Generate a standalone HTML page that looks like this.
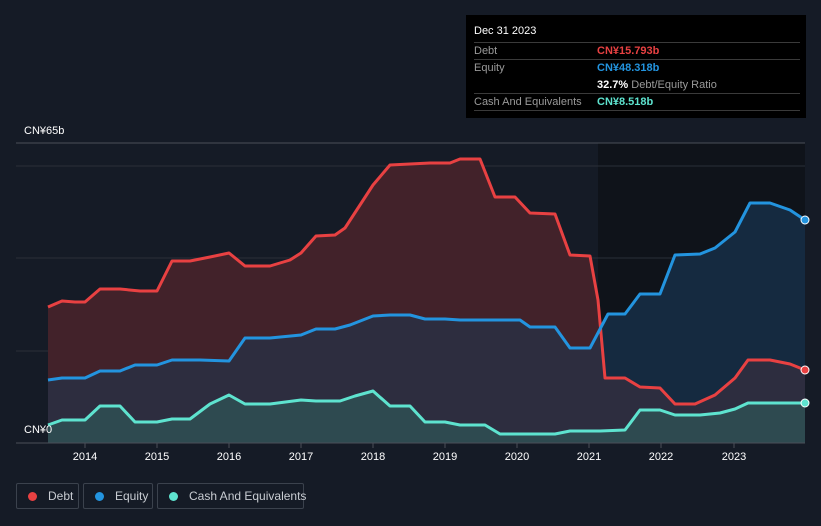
<!DOCTYPE html><html><head><style>
body{margin:0;width:821px;height:526px;background:#151b26;font-family:"Liberation Sans",sans-serif;overflow:hidden;position:relative}
.t{position:absolute;color:#fff;font-size:11px}
.tip{position:absolute;left:466px;top:15px;width:340px;height:103px;background:#000}
.row{position:absolute;left:8px;width:326px;border-top:1px solid #3a3a3a;font-size:11px;color:#9a9a9a}
.lg{position:absolute;top:483px;height:26px;box-sizing:border-box;border:1px solid #3b424d;border-radius:2px;color:#c8ccd2;font-size:12px;line-height:24px;white-space:nowrap}
.lg i{display:inline-block;width:9px;height:9px;border-radius:50%;margin:0 11px 0 11px;vertical-align:-1px}
</style></head><body>
<svg width="821" height="526" style="position:absolute;left:0;top:0">
<rect x="598" y="143" width="207" height="300" fill="#0f131a"/>
<line x1="16" y1="143" x2="805" y2="143" stroke="#4a4f58"/>
<line x1="16" y1="166" x2="805" y2="166" stroke="#2a2f38"/>
<line x1="16" y1="258" x2="805" y2="258" stroke="#2a2f38"/>
<line x1="16" y1="351" x2="805" y2="351" stroke="#2a2f38"/>
<polygon fill="#42222a" points="48,307 62,301 75,302 85,302 100,289 120,289 140,291 157,291 172,261 190,261 210,257 229,253 245,266 270,266 290,260 301,253 316,236 335,235 345,228 360,205 373,185 390,165 410,164 430,163 450,163 460,159 480,159 495,197 515,197 530,213 555,214 570,255 590,256 598,300 605,378 625,378 640,387 660,388 675,404 695,404 715,395 735,378 748,360 770,360 790,364 805,370 805,443 48,443"/>
<polygon fill="#152a40" points="598,330 608,314 625,314 640,294 660,294 675,255 700,254 715,248 735,232 750,203 770,203 790,210 805,220 805,443 598,443"/>
<polygon fill="#2d2d3f" points="48,380 62,378 85,378 100,371 120,371 135,365 157,365 172,360 200,360 229,361 245,338 270,338 301,335 316,329 335,329 350,325 373,316 390,315 410,315 425,319 445,319 460,320 520,320 530,327 555,327 570,348 590,348 598,330 605,378 625,378 640,387 660,388 675,404 695,404 715,395 735,378 748,360 770,360 790,364 805,370 805,443 48,443"/>
<polygon fill="#2e4a50" points="48,425 62,420 85,420 100,406 120,406 135,422 157,422 172,419 190,419 210,404 229,395 245,404 270,404 301,400 316,401 340,401 355,396 373,391 390,406 410,406 425,422 445,422 460,425 485,425 500,434 555,434 570,431 600,431 625,430 640,410 660,410 675,415 700,415 720,413 735,409 748,403 805,403 805,443 48,443"/>
<g fill="none" stroke-width="3" stroke-linejoin="round">
<polyline stroke="#e84142" points="48,307 62,301 75,302 85,302 100,289 120,289 140,291 157,291 172,261 190,261 210,257 229,253 245,266 270,266 290,260 301,253 316,236 335,235 345,228 360,205 373,185 390,165 410,164 430,163 450,163 460,159 480,159 495,197 515,197 530,213 555,214 570,255 590,256 598,300 605,378 625,378 640,387 660,388 675,404 695,404 715,395 735,378 748,360 770,360 790,364 805,370"/>
<polyline stroke="#2394df" points="48,380 62,378 85,378 100,371 120,371 135,365 157,365 172,360 200,360 229,361 245,338 270,338 301,335 316,329 335,329 350,325 373,316 390,315 410,315 425,319 445,319 460,320 520,320 530,327 555,327 570,348 590,348 608,314 625,314 640,294 660,294 675,255 700,254 715,248 735,232 750,203 770,203 790,210 805,220"/>
<polyline stroke="#5ee3cf" points="48,425 62,420 85,420 100,406 120,406 135,422 157,422 172,419 190,419 210,404 229,395 245,404 270,404 301,400 316,401 340,401 355,396 373,391 390,406 410,406 425,422 445,422 460,425 485,425 500,434 555,434 570,431 600,431 625,430 640,410 660,410 675,415 700,415 720,413 735,409 748,403 805,403"/>
</g>
<circle cx="805" cy="220" r="4" fill="#2394df" stroke="#fff"/>
<circle cx="805" cy="370" r="4" fill="#e84142" stroke="#fff"/>
<circle cx="805" cy="403" r="4" fill="#5ee3cf" stroke="#fff"/>
<line x1="16" y1="443" x2="805" y2="443" stroke="#4a4f58"/>
<g stroke="#4a4f58"><line x1="85" y1="443" x2="85" y2="448"/><line x1="157" y1="443" x2="157" y2="448"/><line x1="229" y1="443" x2="229" y2="448"/><line x1="301" y1="443" x2="301" y2="448"/><line x1="373" y1="443" x2="373" y2="448"/><line x1="445" y1="443" x2="445" y2="448"/><line x1="517" y1="443" x2="517" y2="448"/><line x1="589" y1="443" x2="589" y2="448"/><line x1="661" y1="443" x2="661" y2="448"/><line x1="734" y1="443" x2="734" y2="448"/></g>
<g fill="#fff" font-size="11" text-anchor="middle" font-family="Liberation Sans"><text x="85" y="460">2014</text><text x="157" y="460">2015</text><text x="229" y="460">2016</text><text x="301" y="460">2017</text><text x="373" y="460">2018</text><text x="445" y="460">2019</text><text x="517" y="460">2020</text><text x="589" y="460">2021</text><text x="661" y="460">2022</text><text x="734" y="460">2023</text></g>
</svg>
<div class="t" style="left:24px;top:125px">CN¥65b</div>
<div class="t" style="left:24px;top:424px">CN¥0</div>
<div class="tip">
<div style="position:absolute;left:8px;top:10px;color:#fff;font-size:11px">Dec 31 2023</div>
<div class="row" style="top:27px;height:16px;line-height:16px">Debt<span style="position:absolute;left:123px;color:#e84142;font-weight:bold">CN¥15.793b</span></div>
<div class="row" style="top:44px;height:33px;line-height:16px">Equity<span style="position:absolute;left:123px;color:#2394df;font-weight:bold">CN¥48.318b</span><br><span style="position:absolute;left:123px;top:17px"><b style="color:#fff">32.7%</b> Debt/Equity Ratio</span></div>
<div class="row" style="top:78px;height:16px;line-height:16px;border-bottom:1px solid #3a3a3a">Cash And Equivalents<span style="position:absolute;left:123px;color:#5ee3cf;font-weight:bold">CN¥8.518b</span></div>
</div>
<div class="lg" style="left:16px;width:63px"><i style="background:#e84142"></i>Debt</div>
<div class="lg" style="left:83px;width:70px"><i style="background:#2394df"></i>Equity</div>
<div class="lg" style="left:157px;width:147px"><i style="background:#5ee3cf"></i>Cash And Equivalents</div>
</body></html>
